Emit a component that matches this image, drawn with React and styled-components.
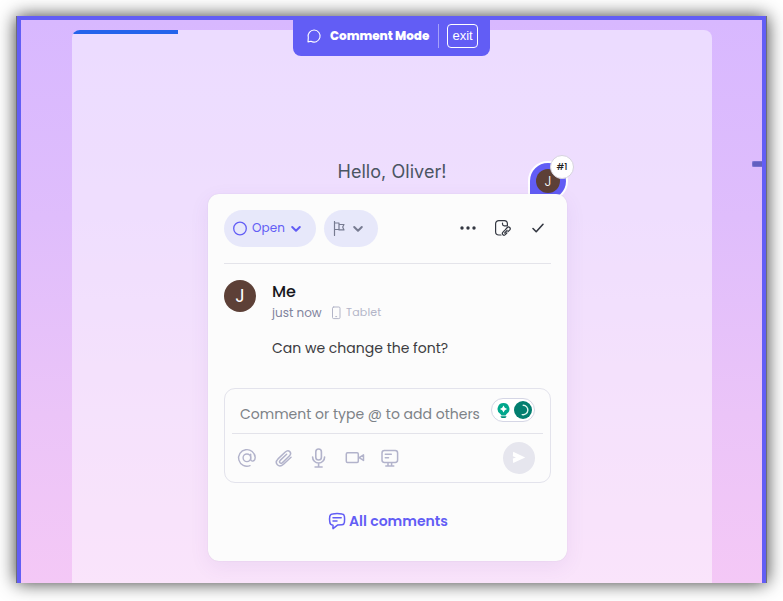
import React from "react";
import styled, { createGlobalStyle } from "styled-components";

const GlobalStyle = createGlobalStyle`
  * { box-sizing: border-box; }
  body { margin: 0; background: #fff; overflow: hidden; font-family: Poppins, Inter, sans-serif; }
`;

const Page = styled.div`
  width: 783px;
  height: 601px;
  padding: 16px;
  overflow: hidden;
`;

const Frame = styled.div`
  position: relative;
  width: 751px;
  height: 567px;
  border-left: 1px solid #6e6e78;
  border-right: 1px solid #6e6e78;
  box-shadow: 0 0 17px rgba(0, 0, 0, 0.78);
`;

const Viewport = styled.div`
  height: 100%;
  border: solid #625df5;
  border-width: 4px 4px 0;
  padding: 10px 50px 0 51px;
  background: linear-gradient(#d8b8ff, #dfbdfc 35%, #ebc4f8 70%, #f4c8f6);
`;

const Survey = styled.main`
  height: 553px;
  overflow: hidden;
  border-radius: 8px 8px 0 0;
  background: rgba(255, 255, 255, 0.5);
`;

const Progress = styled.div`
  width: 106px;
  height: 4px;
  background: #2563eb;
`;

const Greeting = styled.h1`
  margin: 125px 0 0;
  font: 400 18px/26px Inter, sans-serif;
  color: #4b5563;
  text-align: center;
  letter-spacing: 0.05px;
`;

const ModeTab = styled.div`
  position: absolute;
  top: 0;
  left: 276px;
  width: 197px;
  height: 40px;
  padding: 0 12px 0 13px;
  display: flex;
  align-items: center;
  border-radius: 0 0 8px 8px;
  background: #625df5;
  color: #fff;
`;

const ModeTitle = styled.span`
  width: 101px;
  margin-left: 8px;
  font-size: 12px;
  font-weight: 800;
  white-space: nowrap;
  letter-spacing: -0.04px;
`;

const ModeRule = styled.span`
  width: 1px;
  height: 24px;
  margin-left: 8px;
  background: #a5a1fa;
`;

const ExitButton = styled.button`
  width: 31px;
  height: 24px;
  margin-left: 8px;
  padding: 0;
  border: 1px solid #fff;
  border-radius: 4px;
  background: none;
  color: #fff;
  font: 13px/20px "Liberation Sans", Arial, sans-serif;
`;

const SideHandle = styled.span`
  position: absolute;
  right: 4px;
  top: 145px;
  width: 10px;
  height: 6px;
  border-radius: 2px 0 0 2px;
  border: 1px solid #7770d0;
  border-right: 0;
  background: #625fc0;
`;

const Pin = styled.div`
  position: absolute;
  left: 511px;
  top: 145px;
  width: 40px;
  height: 40px;
  padding: 6px;
  border: 2px solid #fff;
  border-radius: 50% 50% 50% 0;
  background: #625df5;
`;

const Avatar = styled.div`
  width: ${(p) => p.$size}px;
  height: ${(p) => p.$size}px;
  flex: none;
  display: grid;
  place-items: center;
  border-radius: 50%;
  background: #5d4037;
  color: #fff;
  font-size: ${(p) => p.$font}px;
  font-weight: ${(p) => p.$weight || 400};
  line-height: 1;
`;

const PinBadge = styled.span`
  position: absolute;
  left: 20px;
  top: -8px;
  width: 24px;
  height: 24px;
  display: grid;
  place-items: center;
  border: 1px solid #d6d3de;
  border-radius: 50%;
  background: #fff;
  color: #222;
  font-size: 9px;
  font-weight: 500;
  line-height: 20px;
`;

const Popover = styled.section`
  position: absolute;
  left: 191px;
  top: 178px;
  width: 359px;
  height: 367px;
  padding: 16px;
  border-radius: 11px;
  background: #fcfcfc;
  box-shadow: 0 0 1px rgba(80, 70, 100, 0.2), 0 6px 20px rgba(100, 60, 150, 0.08);
`;

const Header = styled.header`
  display: flex;
  align-items: flex-start;
  height: 54px;
  border-bottom: 1px solid #e4e4ea;
`;

const Pill = styled.button`
  width: ${(p) => p.$w}px;
  height: 37px;
  margin-right: 8px;
  padding: 0 10px 0 8px;
  display: flex;
  align-items: center;
  border: 0;
  border-radius: 19px;
  background: #e7e8fa;
  color: ${(p) => p.$color};
  font: 400 12px/18px Poppins, Inter, sans-serif;
`;

const PillLabel = styled.span`
  width: 34px;
  margin: -1px 4px 0;
  text-align: left;
  letter-spacing: 0.1px;
`;

const PillGap = styled.span`
  width: 4px;
`;

const HeaderActions = styled.div`
  display: flex;
  align-items: center;
  gap: 15px;
  height: 36px;
  margin-left: auto;
  margin-right: 3px;
  color: #333741;
`;

const Comment = styled.article`
  display: flex;
  gap: 16px;
  height: 124px;
  padding-top: 16px;
`;

const CommentBody = styled.div`
  flex: 1;
  white-space: nowrap;
`;

const Author = styled.h2`
  margin: 0;
  font-size: 16px;
  line-height: 24px;
  font-weight: 500;
  color: #17171c;
`;

const Meta = styled.div`
  display: flex;
  align-items: center;
  height: 17px;
  font-size: 12px;
  color: #80839c;
`;

const Time = styled.span`
  width: 56px;
`;

const Device = styled.span`
  display: flex;
  align-items: center;
  gap: 2px;
  color: #b3b5c8;
  font-size: 11px;
  letter-spacing: 0.2px;
`;

const Message = styled.p`
  margin: 17px 0 0;
  font-size: 14px;
  line-height: 21px;
  color: #3b3b40;
`;

const Composer = styled.div`
  height: 95px;
  padding: 0 7px;
  border: 1px solid #e3e3ec;
  border-radius: 11px;
`;

const InputRow = styled.div`
  height: 45px;
  padding: 9px 8px 0;
  display: flex;
  align-items: flex-start;
  justify-content: space-between;
  border-bottom: 1px solid #e3e3ea;
`;

const Placeholder = styled.span`
  margin-top: 6px;
  font-size: 14px;
  line-height: 21px;
  white-space: nowrap;
  color: #7d8287;
`;

const Assistant = styled.div`
  flex: none;
  width: 44px;
  height: 24px;
  display: flex;
  align-items: center;
  gap: 1px;
  padding: 0 2px;
  border: 1px solid #d5d6e5;
  border-radius: 12px;
  background: #fff;
`;

const Tools = styled.div`
  display: flex;
  align-items: center;
  height: 48px;
  padding: 0 8px 0 5px;
  color: #b2b3cb;
`;

const ToolIcons = styled.div`
  display: flex;
  gap: 16px;
`;

const SendButton = styled.button`
  width: 32px;
  height: 32px;
  padding: 0;
  margin-left: auto;
  display: grid;
  place-items: center;
  border: 0;
  border-radius: 50%;
  background: #e6e6ee;
`;

const AllComments = styled.div`
  display: flex;
  align-items: center;
  justify-content: center;
  gap: 3px;
  height: 20px;
  margin-top: 28px;
  padding-left: 1px;
  color: #625df5;
  font-size: 14px;
  font-weight: 600;
`;

const Svg = styled.svg.attrs({ fill: "none", stroke: "currentColor", strokeLinecap: "round", strokeLinejoin: "round" })`
  display: block;
  flex: none;
`;

const Chevron = () => (
  <Svg width="12" height="12" viewBox="0 0 12 12" strokeWidth="2"><path d="M2.2 4 6 7.8 9.8 4" /></Svg>
);

export default function App() {
  return (
    <>
      <GlobalStyle />
      <Page>
        <Frame>
          <Viewport>
            <Survey>
              <Progress />
              <Greeting>Hello, Oliver!</Greeting>
            </Survey>
          </Viewport>
          <ModeTab>
            <Svg width="16" height="16" viewBox="0 0 16 16" strokeWidth="1.1">
              <path d="M2.3 9.6A6 6 0 1 1 5 13.2L2 13.9Z" />
            </Svg>
            <ModeTitle>Comment Mode</ModeTitle>
            <ModeRule />
            <ExitButton>exit</ExitButton>
          </ModeTab>
          <SideHandle />
          <Pin>
            <Avatar $size={24} $font={14} $weight={300}>J</Avatar>
            <PinBadge>#1</PinBadge>
          </Pin>
          <Popover>
            <Header>
              <Pill $w={92} $color="#625df5">
                <Svg width="16" height="16" viewBox="0 0 16 16" strokeWidth="1.3"><circle cx="8" cy="7.5" r="6.3" /></Svg>
                <PillLabel>Open</PillLabel>
                <Chevron />
              </Pill>
              <Pill $w={54} $color="#777b91">
                <Svg width="16" height="16" viewBox="0 0 16 16" strokeWidth="1.2">
                  <path d="M2.5 .5v14M2.5 2H7v6.5H2.5M7 3.5h5l-1.3 2.6L12 8.9H7" />
                </Svg>
                <PillGap />
                <Chevron />
              </Pill>
              <HeaderActions>
                <Svg width="20" height="20" viewBox="0 0 20 20" strokeWidth="0">
                  <g fill="currentColor"><circle cx="4" cy="10" r="1.7" /><circle cx="10" cy="10" r="1.7" /><circle cx="16" cy="10" r="1.7" /></g>
                </Svg>
                <Svg width="20" height="20" viewBox="0 0 20 20" strokeWidth="1.2">
                  <path d="M8 17H5.8a3.2 3.2 0 0 1-3.2-3.2V5.8a3.2 3.2 0 0 1 3.2-3.2h5.4a3.2 3.2 0 0 1 3.2 3.2v2M9.5 5v1a1.8 1.8 0 0 0 1.8 1.8h3.1" />
                  <path d="m12.2 11.8 2.1-2.3a1.7 1.7 0 0 1 2.5 2.3L15 13.7M14.1 12.3l-2.4 2.7M13.8 15l-1.5 1.7a1.7 1.7 0 0 1-2.5-2.3l1.6-1.7" />
                </Svg>
                <Svg width="20" height="20" viewBox="0 0 20 20" strokeWidth="1.6"><path d="m5 10.5 3.2 3.2 6.8-7.4" /></Svg>
              </HeaderActions>
            </Header>
            <Comment>
              <Avatar $size={32} $font={18}>J</Avatar>
              <CommentBody>
                <Author>Me</Author>
                <Meta>
                  <Time>just now</Time>
                  <Device>
                    <Svg width="16" height="16" viewBox="0 0 16 16" strokeWidth="1">
                      <rect x="4.5" y="2" width="7.5" height="11.6" rx="1.2" /><path d="M7.7 11.6h1" />
                    </Svg>
                    Tablet
                  </Device>
                </Meta>
                <Message>Can we change the font?</Message>
              </CommentBody>
            </Comment>
            <Composer>
              <InputRow>
                <Placeholder>Comment or type @ to add others</Placeholder>
                <Assistant>
                  <Svg width="19" height="20" viewBox="0 0 19 20" strokeWidth="0">
                    <path fill="#00a78c" d="M9.5 3a6 6 0 0 0-3.1 11.1l1.1 1.4h4l1.1-1.4A6 6 0 0 0 9.5 3Z" />
                    <path fill="#008f7a" d="M6.5 16.2h6c-.2 1.1-1 1.8-1.9 1.8H8.4c-.9 0-1.7-.7-1.9-1.8Z" />
                    <path fill="#fff" d="m9.5 5.4 1.3 2.3 2.3 1.3-2.3 1.3-1.3 2.3-1.3-2.3L5.9 9l2.3-1.3Z" />
                  </Svg>
                  <Svg width="18" height="18" viewBox="0 0 18 18" strokeWidth="1.4">
                    <circle cx="9" cy="9" r="9" fill="#027e6f" stroke="none" />
                    <path stroke="#dff6ef" d="M9.2 4.3a4.7 4.7 0 1 1-1 9.3" />
                  </Svg>
                </Assistant>
              </InputRow>
              <Tools>
                <ToolIcons>
                  <Svg width="20" height="20" viewBox="0 0 20 20" strokeWidth="1.4">
                    <circle cx="9.9" cy="9.8" r="3.8" /><path d="M13.7 6.2v5c0 3 4.5 2.5 4.5-1.7A8.3 8.3 0 1 0 13 17.6" />
                  </Svg>
                  <Svg width="20" height="20" viewBox="0 0 20 20" strokeWidth="1.5">
                    <path d="m18 9.2-7.5 7.1c-4.7 4.1-9.7-1.1-5.5-5.4L12.3 4c3.4-3.1 7.2.8 4 4l-6.8 6.6c-2 1.8-4-.4-2.3-2.2l6.4-6.1" />
                  </Svg>
                  <Svg width="20" height="20" viewBox="0 0 20 20" strokeWidth="1.6">
                    <rect x="6.8" y="1" width="5.6" height="11" rx="2.8" /><path d="M3.6 9a6 6 0 0 0 12 0M9.6 15v4M6.1 19h7" />
                  </Svg>
                  <Svg width="20" height="20" viewBox="0 0 20 20" strokeWidth="1.5">
                    <rect x="1.3" y="4.8" width="12" height="9.6" rx="1.2" /><path d="m14.2 9.6 4.3-2.8v5.6Z" />
                  </Svg>
                  <Svg width="20" height="20" viewBox="0 0 20 20" strokeWidth="1.5">
                    <rect x="1" y="2.5" width="15.6" height="12" rx="2.4" /><path d="M4.3 6.2h6M4.3 9.7h3.2M7 15v3M10.6 15v3M4.8 18h8" />
                  </Svg>
                </ToolIcons>
                <SendButton aria-label="Send">
                  <Svg width="14" height="14" viewBox="0 0 14 14" strokeWidth="0">
                    <path fill="#fff" d="M1.2.8 13.2 6.4 1.2 12 .8 7.6 4 6.4.8 5.2Z" />
                  </Svg>
                </SendButton>
              </Tools>
            </Composer>
            <AllComments>
              <Svg width="18" height="18" viewBox="0 0 18 18" strokeWidth="1.5">
                <path d="M4.5 2Q9 1.2 14 2a2.7 2.7 0 0 1 2.4 2.3q.5 3.2 0 6A2.7 2.7 0 0 1 14 12.7l-4.5.4L5 16.6V13.2A3.4 3.4 0 0 1 1.8 10q-.6-2.8 0-5.5A3 3 0 0 1 4.5 2ZM5 5.8h8.2M5 9h4" />
              </Svg>
              All comments
            </AllComments>
          </Popover>
        </Frame>
      </Page>
    </>
  );
}
